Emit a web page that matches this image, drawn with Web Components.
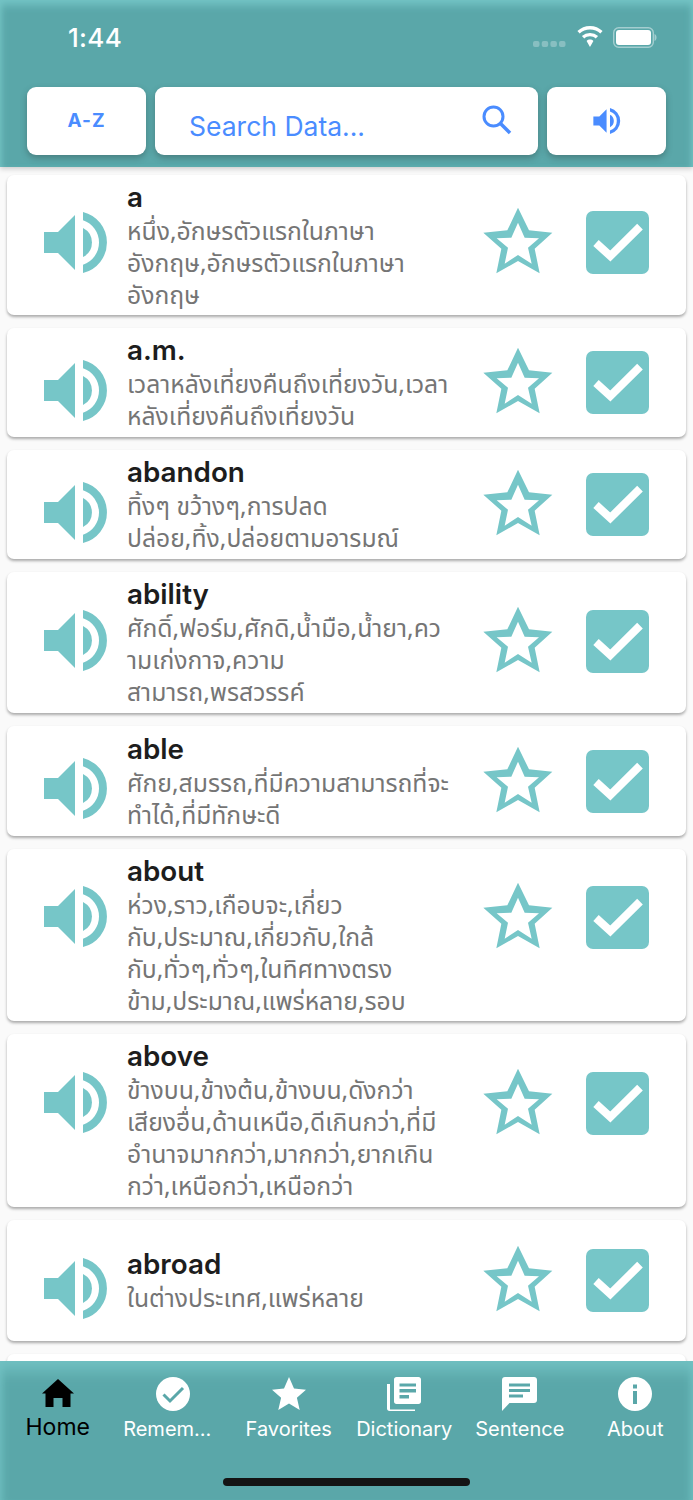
<!DOCTYPE html>
<html lang="th">
<head>
<meta charset="utf-8">
<title>Dictionary</title>
<style>
  html, body { margin: 0; padding: 0; background: #fafafa; }
  body { width: 693px; height: 1500px; overflow: hidden; font-family: Inter, "Noto Sans Thai", "Noto Sans", sans-serif; }
</style>
</head>
<body>
<app-shell>
  <app-header slot="header"></app-header>
  <word-card word="a" check-top="36" speaker-top="37" style="--h:140px">หนึ่ง,อักษรตัวแรกในภาษา<br>อังกฤษ,อักษรตัวแรกในภาษา<br>อังกฤษ</word-card>
  <word-card word="a.m." check-top="23" speaker-top="32" style="--h:109px">เวลาหลังเที่ยงคืนถึงเที่ยงวัน,เวลา<br>หลังเที่ยงคืนถึงเที่ยงวัน</word-card>
  <word-card word="abandon" check-top="23" speaker-top="32" style="--h:109px">ทิ้งๆ ขว้างๆ,การปลด<br>ปล่อย,ทิ้ง,ปล่อยตามอารมณ์</word-card>
  <word-card word="ability" check-top="38" speaker-top="38" style="--h:141px">ศักดิ์,ฟอร์ม,ศักดิ,น้ำมือ,น้ำยา,คว<br>ามเก่งกาจ,ความ<br>สามารถ,พรสวรรค์</word-card>
  <word-card word="able" check-top="24" speaker-top="32" style="--h:110px">ศักย,สมรรถ,ที่มีความสามารถที่จะ<br>ทำได้,ที่มีทักษะดี</word-card>
  <word-card word="about" check-top="37" speaker-top="37" style="--h:172px">ห่วง,ราว,เกือบจะ,เกี่ยว<br>กับ,ประมาณ,เกี่ยวกับ,ใกล้<br>กับ,ทั่วๆ,ทั่วๆ,ในทิศทางตรง<br>ข้าม,ประมาณ,แพร่หลาย,รอบ</word-card>
  <word-card word="above" check-top="38" speaker-top="38" style="--h:173px">ข้างบน,ข้างต้น,ข้างบน,ดังกว่า<br>เสียงอื่น,ด้านเหนือ,ดีเกินกว่า,ที่มี<br>อำนาจมากกว่า,มากกว่า,ยากเกิน<br>กว่า,เหนือกว่า,เหนือกว่า</word-card>
  <word-card word="abroad" check-top="29" speaker-top="38" style="--h:121px">ในต่างประเทศ,แพร่หลาย</word-card>
  <word-card word="" check-top="29" speaker-top="38" style="--h:121px"></word-card>
  <tab-bar slot="footer"></tab-bar>
</app-shell>

<script>
const TEAL_ICON = "#76c6c8";

class AppShell extends HTMLElement {
  constructor() {
    super();
    this.attachShadow({ mode: "open" });
    this.shadowRoot.innerHTML = `
      <style>
        :host { display: flex; flex-direction: column; width: 693px; height: 1500px; background: #fafafa; }
        .list {
          flex: 1; min-height: 0; overflow: hidden;
          display: flex; flex-direction: column; gap: 13px;
          padding: 8px 7px 0;
        }
        ::slotted(word-card) { flex: none; }
      </style>
      <slot name="header"></slot>
      <div class="list"><slot></slot></div>
      <slot name="footer"></slot>
    `;
  }
}

class AppHeader extends HTMLElement {
  constructor() {
    super();
    this.attachShadow({ mode: "open" });
    this.shadowRoot.innerHTML = `
      <style>
        :host {
          display: flex; flex-direction: column; height: 167px; flex: none;
          background: #5aa7a9;
          box-shadow: inset 0 8px 9px -3px #74c4c5, inset 6px 0 7px -5px #74c4c5, inset -6px 0 7px -5px #74c4c5, 0 2px 5px rgba(0, 0, 0, .18);
          position: relative; z-index: 1;
        }
        .status { height: 87px; flex: none; display: flex; justify-content: space-between; align-items: flex-start; padding: 0 36px 0 68px; }
        .time { color: #fff; font: 500 26px/26px Inter, sans-serif; margin-top: 25px; letter-spacing: 0.3px; }
        .sys { display: flex; align-items: center; gap: 10px; margin-top: 26px; }
        .row { display: flex; gap: 9px; padding: 0 27px; }
        .btn {
          height: 68px; background: #fff; border-radius: 9px; flex: none; width: 119px;
          display: flex; align-items: center; justify-content: center;
          box-shadow: 0 3px 6px rgba(50, 80, 80, .45);
          color: #4a8cff;
        }
        .az { font: 700 19px/1 Inter, sans-serif; letter-spacing: 1px; padding-bottom: 2px; box-sizing: border-box; }
        .search { flex: 1; width: auto; justify-content: space-between; padding: 0 26px 0 34px; position: relative; }
        .search span { font: 400 26.5px/1 Inter, "Liberation Sans", sans-serif; margin-top: 10px; }
        .search svg { margin-top: -3px; }
      </style>
      <div class="status">
        <div class="time">1:44</div>
        <div class="sys">
          <svg width="33" height="6" viewBox="0 0 33 6" style="margin-top:14px"><g fill="#fff" opacity=".28"><rect width="6.500" height="6" rx="2"/><rect x="8.700" width="6.500" height="6" rx="2"/><rect x="17.400" width="6.500" height="6" rx="2"/><rect x="26" width="6.500" height="6" rx="2"/></g></svg>
          <svg width="28" height="22" viewBox="0 0 28 22" fill="#fff"><path d="M14 3.4c4 0 7.600 1.500 10.300 4.100l2.300-2.500C23.200 1.900 18.800 0 14 0S4.800 1.900 1.400 5l2.300 2.500C6.400 4.900 10 3.400 14 3.400z"/><path d="M14 10.300c2.200 0 4.200.8 5.700 2.200l2.400-2.500A12 12 0 0 0 14 6.900 12 12 0 0 0 5.900 10l2.400 2.500c1.500-1.400 3.500-2.200 5.700-2.200z"/><path d="M14 13.600c-1.300 0-2.500.5-3.400 1.300l3.400 6.100 3.400-6.100c-.9-.8-2.100-1.300-3.400-1.300z"/></svg>
          <svg width="44" height="21" viewBox="0 0 44 21" style="margin-left:-1px"><rect x=".7" y=".7" width="39.600" height="19.600" rx="5" fill="none" stroke="#fff" stroke-opacity=".45" stroke-width="1.400"/><rect x="3" y="3" width="35" height="15" rx="3" fill="#fff"/><path d="M41.500 7v7c1.300-.4 2-1.800 2-3.500s-.7-3.100-2-3.500z" fill="#fff" opacity=".45"/></svg>
        </div>
      </div>
      <div class="row">
        <div class="btn az">A-Z</div>
        <div class="btn search">
          <span>Search Data...</span>
          <svg width="30" height="30" viewBox="0 0 30 30" fill="none" stroke="#4a8cff"><circle cx="11.500" cy="11.500" r="9.500" stroke-width="3"/><path d="M18.500 18.500L28 28" stroke-width="3.600"/></svg>
        </div>
        <div class="btn">
          <svg width="28" height="26" viewBox="0 0 64 61" fill="#4a8cff"><path d="M0 20h14L31 3v55L14 41H0z"/><path d="M39 15.900a16.400 16.400 0 0 1 0 29.200z"/><path d="M39 0a31.400 31.400 0 0 1 0 61v-8.300a23.400 23.400 0 0 0 0-44.400z"/></svg>
        </div>
      </div>
    `;
  }
}

class WordCard extends HTMLElement {
  constructor() {
    super();
    this.attachShadow({ mode: "open" });
  }

  connectedCallback() {
    const word = this.getAttribute("word");
    const checkTop = this.getAttribute("check-top");
    const speakerTop = this.getAttribute("speaker-top");
    this.shadowRoot.innerHTML = `
      <style>
        :host {
          display: grid; grid-template-columns: 120px 356px 103px 63px;
          height: var(--h); box-sizing: border-box;
          background: #fff; border-radius: 7px;
          box-shadow: 0 2px 3px rgba(0, 0, 0, .32);
        }
        .speaker { margin: ${speakerTop}px 0 0 37px; }
        .text { align-self: center; }
        .word { font: 600 27.8px/33px Inter, sans-serif; color: #1d1d1d; height: 33px; }
        .mean { font: 400 24.7px/32px "Noto Sans Thai", "Noto Sans", "DejaVu Sans", sans-serif; color: #757575; white-space: nowrap; padding-top: 3px; margin-bottom: -3px; }
        .star { margin-top: ${checkTop - 4}px; }
        .check { margin-top: ${checkTop}px; }
      </style>
      <svg class="speaker" width="64" height="61" viewBox="0 0 64 61" fill="${TEAL_ICON}">
        <path d="M0 20h14L31 3v55L14 41H0z"/>
        <path d="M39 15.900a16.400 16.400 0 0 1 0 29.200z"/>
        <path d="M39 0a31.400 31.400 0 0 1 0 61v-8.300a23.400 23.400 0 0 0 0-44.400z"/>
      </svg>
      <div class="text">
        <div class="word">${word}</div>
        <div class="mean"><slot></slot></div>
      </div>
      <svg class="star" width="70" height="67" viewBox="67 114 210 199" fill="${TEAL_ICON}" fill-rule="evenodd">
        <path d="M172 115L205 183L275 190L222 238L237 312L172 275L107 312L122 238L68 190L140 183Z M172 160L152 205L108 207L142 235L132 283L172 257L213 283L202 235L235 207L192 205Z"/>
      </svg>
      <svg class="check" width="63" height="63" viewBox="0 0 63 63">
        <rect width="63" height="63" rx="7" fill="${TEAL_ICON}"/>
        <path d="M10 32L24.300 45L54 15.700" fill="none" stroke="#fff" stroke-width="8"/>
      </svg>
    `;
  }
}

class TabItem extends HTMLElement {
  constructor() {
    super();
    this.attachShadow({ mode: "open" });
    this.shadowRoot.innerHTML = `
      <style>
        :host {
          flex: 1 1 0; min-width: 0; display: flex; flex-direction: column; align-items: center;
          color: #fff; font: 400 20px/24px Inter, sans-serif;
        }
        :host([active]) { color: #000; font-size: 23px; line-height: 26px; }
        :host([active]) .label { margin-top: 3px; }
        .icon { height: 34px; display: flex; }
        .label { margin-top: 6px; white-space: nowrap; }
        :host([shift]) .label { margin-right: 12px; }
      </style>
      <div class="icon"><slot name="icon"></slot></div>
      <div class="label"><slot></slot></div>
    `;
  }
}

class TabBar extends HTMLElement {
  constructor() {
    super();
    this.attachShadow({ mode: "open" });
    this.shadowRoot.innerHTML = `
      <style>
        :host {
          display: block; height: 139px; flex: none; position: relative; z-index: 1;
          background: #5aa7a9; box-sizing: border-box;
          box-shadow: inset 0 24px 16px -14px #71c1c2, inset 9px 0 9px -7px #71c1c2, inset -9px 0 9px -7px #71c1c2;
        }
        .tabs { display: flex; padding-top: 16px; }
        .handle { position: absolute; left: 223px; top: 117px; width: 247px; height: 8px; border-radius: 4px; background: #141414; }
      </style>
      <div class="tabs">
        <tab-item active>
          <svg slot="icon" width="34" height="34" viewBox="0 0 34 34" fill="#000"><path d="M17 2L33 16.500H29.500V30H21.500V21H12.500V30H4.500V16.500H1Z"/></svg>
          Home
        </tab-item>
        <tab-item shift>
          <svg slot="icon" width="34" height="34" viewBox="0 0 34 34"><circle cx="17" cy="17" r="17" fill="#fff"/><path d="M7.500 17.500L14 24L27 11" fill="none" stroke="#5aa7a9" stroke-width="3"/></svg>
          Remem...
        </tab-item>
        <tab-item>
          <svg slot="icon" width="34" height="34" viewBox="0 0 34 34" fill="#fff"><path d="M17 0l5 11.600 12 1.100-9.100 8 2.800 12.300L17 26.500 6.300 33l2.800-12.300-9.100-8 12-1.100z"/></svg>
          Favorites
        </tab-item>
        <tab-item>
          <svg slot="icon" width="34" height="34" viewBox="0 0 34 34" fill="#fff"><path d="M0 7h3v25c0 0 0 .5.500.5H28V34H2.500C1 34 0 33 0 31.500z"/><path fill-rule="evenodd" d="M9.500 0H31.500C33 0 34 1 34 2.500V24.500C34 26 33 27 31.500 27H9.500C8 27 7 26 7 24.500V2.500C7 1 8 0 9.500 0zM12.500 6.500V9.500H29V6.500zM12.500 12V15.500H29V12zM12.500 18V21.500H22V18z"/></svg>
          Dictionary
        </tab-item>
        <tab-item>
          <svg slot="icon" width="35" height="34" viewBox="0 0 35 34" fill="#fff"><path fill-rule="evenodd" d="M3 0H32C33.800 0 35 1.200 35 3V23C35 24.800 33.800 26 32 26H7.500L0 34V3C0 1.200 1.200 0 3 0zM7 6.500V9.500H28V6.500zM7 12V15H28V12zM7 17.500V20.500H21V17.500z"/></svg>
          Sentence
        </tab-item>
        <tab-item>
          <svg slot="icon" width="34" height="34" viewBox="0 0 34 34"><circle cx="17" cy="17" r="17" fill="#fff"/><rect x="15" y="14" width="4" height="13" fill="#5aa7a9"/><rect x="15" y="7.500" width="4" height="4" fill="#5aa7a9"/></svg>
          About
        </tab-item>
      </div>
      <div class="handle"></div>
    `;
  }
}

customElements.define("app-shell", AppShell);
customElements.define("app-header", AppHeader);
customElements.define("word-card", WordCard);
customElements.define("tab-item", TabItem);
customElements.define("tab-bar", TabBar);
</script>
</body>
</html>
